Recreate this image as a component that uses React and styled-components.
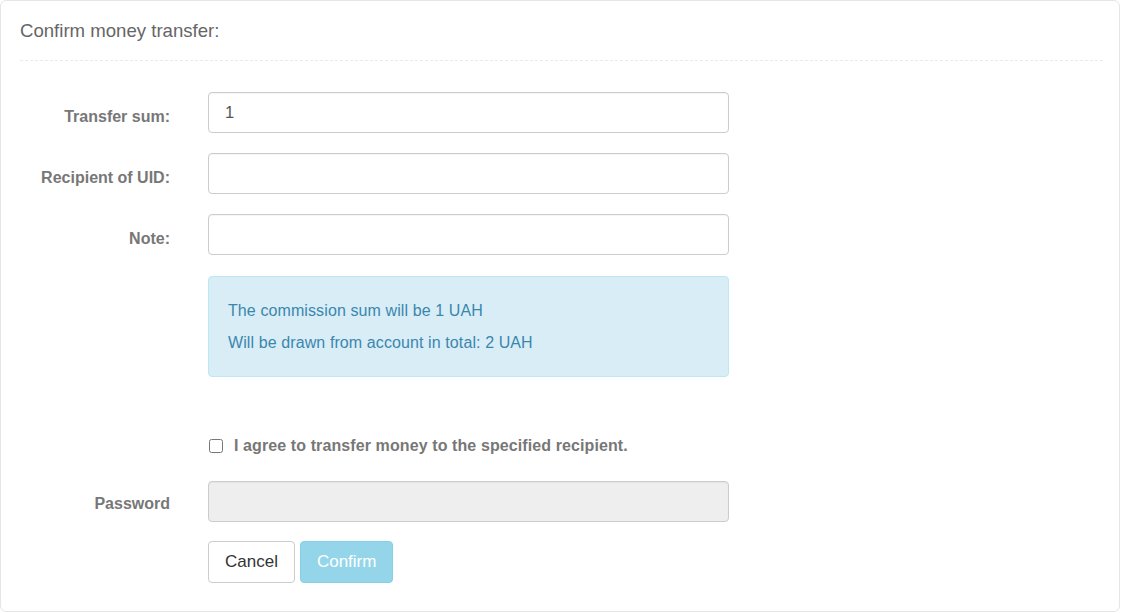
import React, { useState } from 'react';
import styled, { createGlobalStyle } from 'styled-components';

const GlobalStyle = createGlobalStyle`
    html, body {
        margin: 0;
        padding: 0;
        background: #fff;
    }
    body {
        font-family: "Liberation Sans", Arial, sans-serif;
        font-size: 16px;
        color: #555;
    }
    * {
        box-sizing: border-box;
    }
`;

const Panel = styled.div`
    width: 1120px;
    height: 612px;
    border: 1px solid #e6e6e6;
    border-radius: 6px;
    padding: 0 16px 0 19px;
    background: #fff;
`;

const PanelHead = styled.div`
    padding: 19px 0 18px;
    border-bottom: 1px dashed #eaeaea;
`;

const PanelTitle = styled.h3`
    margin: 0;
    font-size: 18.6px;
    font-weight: normal;
    line-height: 22px;
    color: #666;
`;

const Form = styled.form`
    margin-top: 31px;
`;

const FormRow = styled.div`
    display: grid;
    grid-template-columns: 150px 521px;
    column-gap: 38px;
    margin-top: ${p => p.$mt || 0}px;
`;

const Label = styled.label`
    text-align: right;
    font-weight: bold;
    font-size: 16px;
    line-height: 22px;
    color: #777;
    padding-top: ${p => p.$pt || 14}px;
`;

const Input = styled.input`
    display: block;
    width: 100%;
    height: 41px;
    padding: 0 16px;
    border: 1px solid #ccc;
    border-radius: 4px;
    font-family: inherit;
    font-size: 16.5px;
    color: #555;
    background: ${p => (p.disabled ? '#eee' : '#fff')};
    box-shadow: inset 0 1px 1px rgba(0, 0, 0, 0.04);
    outline: none;
`;

const Alert = styled.div`
    grid-column: 2;
    background: #d9edf7;
    border: 1px solid #bce8f1;
    border-radius: 4px;
    color: #3a87ad;
    padding: 23px 19px 22px;
    display: flex;
    flex-direction: column;
    gap: 10px;
`;

const AlertLine = styled.p`
    margin: 0;
    font-size: 16px;
    line-height: 22px;
    letter-spacing: 0.1px;
`;

const CheckLabel = styled.label`
    grid-column: 2;
    display: flex;
    align-items: center;
    gap: 11px;
    font-weight: bold;
    font-size: 16px;
    line-height: 22px;
    color: #777;
    letter-spacing: 0.1px;
    cursor: pointer;
`;

const CheckBox = styled.input`
    width: 14px;
    height: 14px;
    margin: 0 0 0 1px;
`;

const Buttons = styled.div`
    grid-column: 2;
    display: flex;
    gap: 5px;
`;

const Button = styled.button`
    height: 42px;
    padding: 0 16px;
    border-radius: 4px;
    font-family: inherit;
    font-size: 17px;
    border: 1px solid ${p => (p.$primary ? '#46b8da' : '#ccc')};
    background: ${p => (p.$primary ? '#5bc0de' : '#fff')};
    color: ${p => (p.$primary ? '#fff' : '#333')};
    opacity: ${p => (p.disabled ? 0.65 : 1)};
    cursor: ${p => (p.disabled ? 'not-allowed' : 'pointer')};
`;

const App = () => {
    const [sum, setSum] = useState('1');
    const [agree, setAgree] = useState(false);

    return (
        <>
            <GlobalStyle />
            <Panel>
                <PanelHead>
                    <PanelTitle>Confirm money transfer:</PanelTitle>
                </PanelHead>
                <Form onSubmit={e => e.preventDefault()}>
                    <FormRow>
                        <Label>Transfer sum:</Label>
                        <Input value={sum} onChange={e => setSum(e.target.value)} />
                    </FormRow>
                    <FormRow $mt={20}>
                        <Label>Recipient of UID:</Label>
                        <Input />
                    </FormRow>
                    <FormRow $mt={20}>
                        <Label>Note:</Label>
                        <Input />
                    </FormRow>
                    <FormRow $mt={21}>
                        <Alert>
                            <AlertLine>The commission sum will be 1 UAH</AlertLine>
                            <AlertLine>Will be drawn from account in total: 2 UAH</AlertLine>
                        </Alert>
                    </FormRow>
                    <FormRow $mt={58}>
                        <CheckLabel>
                            <CheckBox type="checkbox" checked={agree} onChange={() => setAgree(!agree)} />
                            I agree to transfer money to the specified recipient.
                        </CheckLabel>
                    </FormRow>
                    <FormRow $mt={24}>
                        <Label $pt={12}>Password</Label>
                        <Input type="password" disabled={!agree} />
                    </FormRow>
                    <FormRow $mt={19}>
                        <Buttons>
                            <Button type="button">Cancel</Button>
                            <Button type="submit" $primary disabled={!agree}>Confirm</Button>
                        </Buttons>
                    </FormRow>
                </Form>
            </Panel>
        </>
    );
};

export default App;
